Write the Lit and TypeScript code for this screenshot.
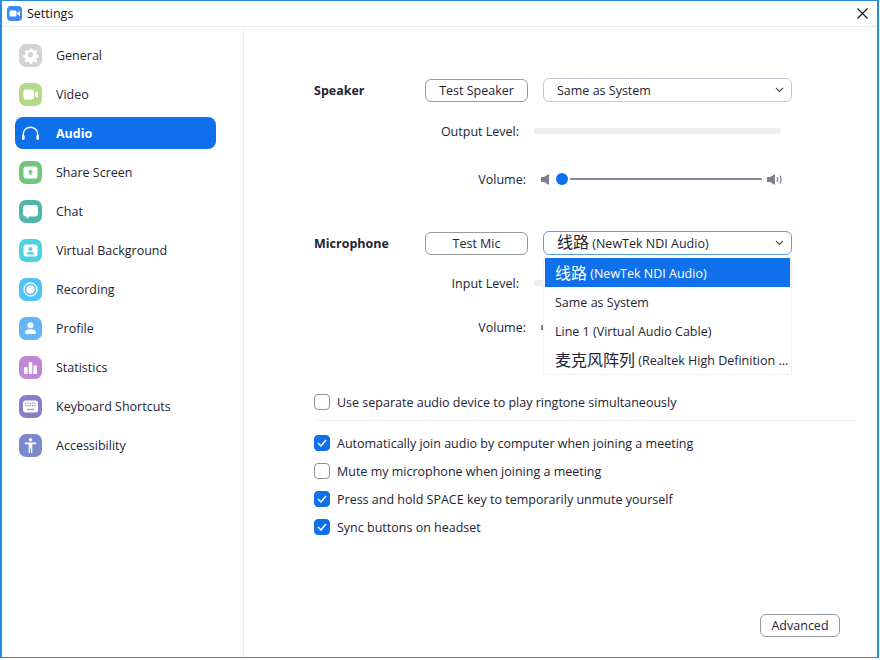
import { LitElement, html, css, svg } from "lit";
import { customElement } from "lit/decorators.js";

const glyphs: Record<string, unknown> = {
  General: svg`<path fill="#fff" fill-rule="evenodd" d="M11.5 4.5l1.6 0 .6 2 1.5.6 1.9-1 1.5 1.5-1 1.9.6 1.5 2 .6 0 2.2-2 .6-.6 1.5 1 1.9-1.5 1.5-1.9-1-1.5.6-.6 2-2.2 0-.6-2-1.500-.6-1.900 1-1.500-1.500 1-1.900-.6-1.500-2-.6 0-2.200 2-.6.6-1.500-1-1.900 1.500-1.500 1.900 1 1.500-.6.6-2z M11.500 8.700a2.800 2.800 0 1 0 .01 0z" transform="translate(.6 .1) scale(.95)"/>`,
  Video: svg`<path fill="#fff" d="M4.500 8.500a2 2 0 0 1 2-2h6.500a2 2 0 0 1 2 2v6a2 2 0 0 1-2 2H6.500a2 2 0 0 1-2-2z"/><path fill="#fff" d="M16 10l3-2.200v7.400L16 13z"/>`,
  "Share Screen": svg`<rect x="4.500" y="5.500" width="14" height="12" rx="2.500" fill="#fff"/><path fill="#72c47e" d="M11.500 8.500l3 3h-2v2.500h-2V11.500h-2z"/>`,
  Chat: svg`<path fill="#fff" d="M7 5h9a3 3 0 0 1 3 3v5.500a3 3 0 0 1-3 3h-5.500L7.500 19v-2.500H7a3 3 0 0 1-3-3V8a3 3 0 0 1 3-3z"/>`,
  "Virtual Background": svg`<rect x="4.500" y="5.500" width="14" height="12" rx="2.500" fill="#fff"/><circle cx="11.500" cy="10" r="2" fill="#4fd2e0"/><path fill="#4fd2e0" d="M7.500 15.500c0-2 1.800-2.800 4-2.800s4 .8 4 2.800z"/>`,
  Recording: svg`<circle cx="11.500" cy="11.500" r="6.500" fill="none" stroke="#fff" stroke-width="1.300"/><circle cx="11.500" cy="11.500" r="4.200" fill="#fff"/>`,
  Profile: svg`<circle cx="11.500" cy="8.300" r="3" fill="#fff"/><path fill="#fff" d="M6 15.500c0-2.200 2.500-3.200 5.500-3.200s5.500 1 5.500 3.200c0 .9-.6 1.500-1.500 1.500h-8c-.9 0-1.500-.6-1.500-1.500z"/>`,
  Statistics: svg`<rect x="5" y="11" width="3.600" height="7" rx=".8" fill="#fff"/><rect x="9.700" y="6" width="3.600" height="12" rx=".8" fill="#fff"/><rect x="14.400" y="9.500" width="3.600" height="8.500" rx=".8" fill="#fff"/>`,
  "Keyboard Shortcuts": svg`<rect x="4" y="5.500" width="15" height="12" rx="2.500" fill="#fff"/><g fill="#a99ad8"><rect x="6" y="7.500" width="1.400" height="1.400"/><rect x="8.300" y="7.500" width="1.400" height="1.400"/><rect x="10.600" y="7.500" width="1.400" height="1.400"/><rect x="12.900" y="7.500" width="1.400" height="1.400"/><rect x="15.200" y="7.500" width="1.400" height="1.400"/><rect x="6" y="10" width="1.400" height="1.400"/><rect x="8.300" y="10" width="1.400" height="1.400"/><rect x="10.600" y="10" width="1.400" height="1.400"/><rect x="12.900" y="10" width="1.400" height="1.400"/><rect x="15.200" y="10" width="1.400" height="1.400"/><rect x="8" y="13.800" width="7" height="1.300"/></g>`,
  Accessibility: svg`<circle cx="11.500" cy="5.800" r="1.800" fill="#fff"/><path fill="#fff" d="M5.800 8.500h11.400v1.700h-3.900V19h-1.300v-4.500h-1V19H9.700v-8.800H5.800z"/>`,
};

const nav: [string, string][] = [
  ["General", "#d3d3d3"],
  ["Video", "#b5d98b"],
  ["Audio", ""],
  ["Share Screen", "#72c47e"],
  ["Chat", "#50b5aa"],
  ["Virtual Background", "#4fd2e0"],
  ["Recording", "#4fc3f7"],
  ["Profile", "#64b5f8"],
  ["Statistics", "#c186d6"],
  ["Keyboard Shortcuts", "#8c7cc8"],
  ["Accessibility", "#7c88cc"],
];

const options: [string, string][] = [
  ["线路", " (NewTek NDI Audio)"],
  ["", "Same as System"],
  ["", "Line 1 (Virtual Audio Cable)"],
  ["麦克风阵列", " (Realtek High Definition ..."],
];

const chevron = html`<svg class="chev" width="9" height="6" viewBox="0 0 9 6"><path d="M1 1l3.500 3.500L8 1" fill="none" stroke="#55556a" stroke-width="1.200"/></svg>`;
const spkLow = html`<svg width="9" height="11" viewBox="0 0 9 11"><path fill="#7e7e8c" d="M0 3h3l5-3v11L3 8H0z"/></svg>`;
const spkHigh = html`<svg width="16" height="11" viewBox="0 0 16 11"><path fill="#7e7e8c" d="M0 3h3l5-3v11L3 8H0z"/><path d="M10 3c1 1.500 1 3.500 0 5M12.800 1.500c1.600 2.500 1.600 5.500 0 8" fill="none" stroke="#7e7e8c" stroke-width="1.200"/></svg>`;

@customElement("app-root")
export class AppRoot extends LitElement {
  static styles = css`
    :host { display: block; width: 880px; height: 660px; background: #fff; font-family: "Open Sans", "Noto Sans CJK SC", sans-serif; font-size: 12.500px; color: #232333; }
    .window { width: 879px; height: 658px; box-sizing: border-box; border: 1px solid #2a8bdb; border-left-width: 2px; border-right-width: 2px; display: flex; flex-direction: column; background: #fff; }
    .title { height: 25px; flex: none; display: flex; align-items: center; border-bottom: 1px solid #ebedf3; font-size: 12.500px; color: #111; }
    .logo { margin: 0 5px 0 5px; }
    .title span { flex: 1; }
    .close { margin-right: 9px; }
    .body { flex: 1; display: flex; min-height: 0; }
    .side { width: 242px; flex: none; box-sizing: border-box; border-right: 1px solid #ebedf3; padding: 12px 27px 0 13px; }
    .item { height: 32px; margin-bottom: 7px; display: flex; align-items: center; border-radius: 8px; padding-left: 4px; gap: 14px; }
    .item.on { background: #0e71eb; color: #fff; font-weight: 700; }
    .item svg { flex: none; display: block; }
    .main { flex: 1; padding: 51px 21px 0 70px; position: relative; min-width: 0; display: flex; flex-direction: column; }
    .row { display: flex; align-items: center; height: 24px; }
    .head { width: 111px; font-weight: 700; flex: none; }
    .btn { box-sizing: border-box; border: 1px solid #98989f; border-radius: 6px; background: #fff; height: 23px; display: flex; align-items: center; justify-content: center; }
    .test { width: 103px; margin-right: 15px; align-self: flex-end; }
    .select { box-sizing: border-box; width: 249px; height: 24px; border: 1px solid #c8c8d4; border-radius: 6px; display: flex; align-items: center; justify-content: space-between; padding: 0 7px 0 13px; }
    .select.focus { border-color: #5b9de8; }
    .chev { flex: none; }
    .cjk { font-size: 16px; line-height: 16px; }
    .lvl { margin-top: 19px; height: 20px; display: flex; align-items: center; }
    .lab { width: 205px; text-align: right; flex: none; padding-top: 1px; }
    .input-lvl .lab, .second .lab { padding-top: 0; }
    .bar { width: 247px; height: 6px; border-radius: 3px; background: #eeeeee; margin-left: 15px; }
    .vol { margin-top: 28px; height: 20px; display: flex; align-items: center; }
    .vol .lab { width: 212px; margin-right: 15px; }
    .thumb { width: 12px; height: 12px; border-radius: 50%; background: #0e71eb; margin: 0 2px 0 6px; flex: none; }
    .track { width: 192px; height: 2px; background: #8a8a9c; margin-right: 5px; flex: none; }
    .mic { margin-top: 42px; }
    .input-lvl { margin-top: 18px; }
    .vol.second { margin-top: 24px; }
    .menu { position: absolute; left: 299px; top: 231px; width: 249px; height: 117px; box-sizing: border-box; background: #fff; border: 1px solid #f0f0f4; border-top: none; padding: 0 1px; }
    .opt { box-sizing: border-box; height: 29px; display: flex; align-items: center; padding: 1px 0 0 10px; white-space: pre; overflow: hidden; }
    .opt.on { background: #0e71eb; color: #fff; }
    .ring { margin-top: 51px; }
    .check { display: flex; align-items: center; gap: 7px; height: 28px; }
    .box { box-sizing: border-box; width: 16px; height: 16px; border-radius: 4px; border: 1px solid #909098; background: #fff; flex: none; }
    .box.on { background: #0e71eb; border-color: #0e71eb; display: flex; align-items: center; justify-content: center; }
    .rule { height: 1px; background: #ededf0; margin: 4px 0 8px; }
    .adv { margin-top: auto; margin-bottom: 20px; align-self: flex-end; width: 80px; margin-right: 16px; }
  `;

  private check(label: string, on: boolean) {
    return html`<div class="check">
      <div class="box ${on ? "on" : ""}">${on ? html`<svg width="10" height="8" viewBox="0 0 10 8"><path d="M1 4l3 3 5-6" fill="none" stroke="#fff" stroke-width="1.500"/></svg>` : ""}</div>
      <span>${label}</span>
    </div>`;
  }

  render() {
    return html`<div class="window">
      <div class="title">
        <svg class="logo" width="15" height="15" viewBox="0 0 15 15"><rect width="15" height="15" rx="4" fill="#3d8bfa"/><rect x="2.500" y="4.500" width="7" height="6" rx="1.300" fill="#fff"/><path d="M10 7l3-2v5l-3-2z" fill="#fff"/></svg>
        <span>Settings</span>
        <svg class="close" width="11" height="11" viewBox="0 0 11 11"><path d="M.5.5l10 10M10.500.5l-10 10" stroke="#111" stroke-width="1.100" fill="none"/></svg>
      </div>
      <div class="body">
        <nav class="side">
          ${nav.map(([name, colour]) => name === "Audio"
            ? html`<div class="item on"><svg width="23" height="23" viewBox="0 0 23 23"><path d="M4.200 17v-4.500a7.300 7.300 0 0 1 14.600 0V17" fill="none" stroke="#fff" stroke-width="1.400"/><rect x="3" y="13" width="2.600" height="5" rx="1.200" fill="#fff"/><rect x="17.400" y="13" width="2.600" height="5" rx="1.200" fill="#fff"/></svg><span>${name}</span></div>`
            : html`<div class="item"><svg width="23" height="23" viewBox="0 0 23 23"><rect width="23" height="23" rx="7" fill="${colour}"/>${glyphs[name]}</svg><span>${name}</span></div>`)}
        </nav>
        <main class="main">
          <div class="row"><div class="head">Speaker</div><div class="btn test">Test Speaker</div><div class="select"><span>Same as System</span>${chevron}</div></div>
          <div class="lvl"><div class="lab">Output Level:</div><div class="bar"></div></div>
          <div class="vol"><div class="lab">Volume:</div>${spkLow}<div class="thumb"></div><div class="track"></div>${spkHigh}</div>
          <div class="row mic"><div class="head">Microphone</div><div class="btn test">Test Mic</div><div class="select focus"><span><span class="cjk">线路</span> (NewTek NDI Audio)</span>${chevron}</div></div>
          <div class="lvl input-lvl"><div class="lab">Input Level:</div><div class="bar"></div></div>
          <div class="vol second"><div class="lab">Volume:</div>${spkLow}</div>
          <div class="menu">
            ${options.map(([cjk, text], i) => html`<div class="opt ${i === 0 ? "on" : ""}">${cjk ? html`<span class="cjk">${cjk}</span>` : ""}${text}</div>`)}
          </div>
          <div class="ring">${this.check("Use separate audio device to play ringtone simultaneously", false)}</div>
          <div class="rule"></div>
          ${this.check("Automatically join audio by computer when joining a meeting", true)}
          ${this.check("Mute my microphone when joining a meeting", false)}
          ${this.check("Press and hold SPACE key to temporarily unmute yourself", true)}
          ${this.check("Sync buttons on headset", true)}
          <div class="btn adv">Advanced</div>
        </main>
      </div>
    </div>`;
  }
}
